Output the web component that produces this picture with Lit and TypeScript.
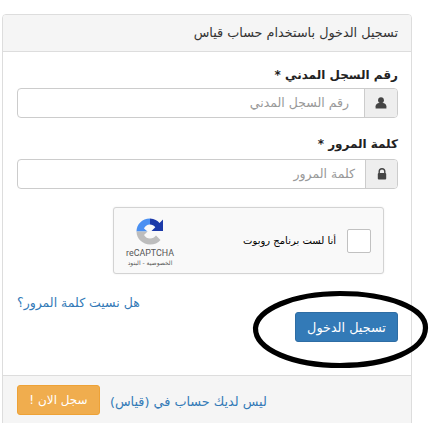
import { LitElement, html, css } from "lit";
import { customElement } from "lit/decorators.js";

@customElement("app-root")
export class AppRoot extends LitElement {
  static styles = css`
    :host { display: block; height: 423px; overflow: hidden; position: relative; background: #fff; font-family: "DejaVu Sans", "Liberation Sans", sans-serif; color: #333; font-size: 14px; }
    * { box-sizing: border-box; }
    .panel { direction: rtl; width: 410px; margin: 14px 0 0 2px; height: 420px; border: 1px solid #ddd; border-radius: 4px; display: flex; flex-direction: column; background: #fff; }
    .head { height: 37px; background: #f5f5f5; border-bottom: 1px solid #ddd; padding: 0 13px; display: flex; align-items: center; font-size: 12.8px; line-height: 20px; border-radius: 3px 3px 0 0; }
    .body { padding: 0 13px 0 14px; flex: none; height: 323px; display: flex; flex-direction: column; }
    label { display: block; font-weight: bold; font-size: 12px; line-height: 20px; color: #222; }
    .l1 { margin-top: 13px; margin-bottom: 3px; }
    .l2 { margin-top: 16px; margin-bottom: 5px; }
    .group { display: flex; height: 30px; border: 1px solid #ccc; border-radius: 4px; overflow: hidden; }
    .addon { width: 33px; flex: none; background: #eee; border-left: 1px solid #ccc; display: flex; align-items: center; justify-content: center; color: #444; }
    .addon.narrow { width: 32px; }
    .ph { flex: 1; padding: 0 15px 2px; font-size: 12.5px; color: #999; display: flex; align-items: center; }
    .ph.tight { padding: 0 10px 2px; }
    .captcha { direction: ltr; margin: 18px 14px 0 0; align-self: flex-start; width: 271px; height: 67px; border: 1px solid #d3d3d3; border-radius: 3px; background: #f9f9f9; display: flex; align-items: flex-start; box-shadow: 0 0 2px rgba(0,0,0,0.08); }
    .logo { width: 72px; display: flex; flex-direction: column; align-items: center; flex: none; padding-top: 9px; }
    .logo svg { display: block; }
    .rc { font-family: "Roboto", "Liberation Sans", sans-serif; font-size: 8.9px; line-height: 10px; color: #555; margin-top: 2px; }
    .terms { direction: rtl; font-size: 6px; line-height: 9px; color: #555; }
    .robot { flex: 1; height: 100%; direction: rtl; display: flex; align-items: center; padding-right: 12px; font-size: 10px; color: #000; gap: 11px; }
    .check { width: 24px; height: 24px; background: #fff; border: 1px solid #c1c1c1; border-radius: 2px; flex: none; }
    a { color: #337ab7; font-size: 12.5px; line-height: 18px; text-decoration: none; }
    .forgot { direction: rtl; align-self: flex-end; margin-top: 20px; }
    .submit { align-self: flex-start; margin-top: 0; width: 103px; height: 30px; background: #337ab7; border: 1px solid #2e6da4; border-radius: 3px; color: #fff; font-size: 12.8px; display: flex; align-items: center; justify-content: center; }
    .foot { flex: 1; background: #f5f5f5; border-top: 1px solid #ddd; padding: 9px 14px; display: flex; align-items: flex-start; gap: 10px; justify-content: flex-end; }
    .foot a { order: 1; font-size: 12.8px; margin-top: 8px; }
    .warn { width: 83px; height: 30px; background: #f0ad4e; border: 1px solid #eea236; border-radius: 3px; color: #fff; font-size: 12px; display: flex; align-items: center; justify-content: center; order: 2; }
    .ring { position: absolute; left: 250px; top: 288px; pointer-events: none; }
  `;

  render() {
    return html`
      <div class="panel">
        <div class="head">تسجيل الدخول باستخدام حساب قياس</div>
        <div class="body">
          <label class="l1">رقم السجل المدني *</label>
          <div class="group">
            <div class="addon"><svg width="12" height="12" viewBox="0 0 12 12"><circle cx="6" cy="3.2" r="2.9" fill="#444"/><path d="M.6 11.5V9.2C.6 7.4 2.4 6.2 4 6h4c1.6.2 3.4 1.4 3.4 3.2v2.3z" fill="#444"/></svg></div>
            <div class="ph">رقم السجل المدني</div>
          </div>
          <label class="l2">كلمة المرور *</label>
          <div class="group">
            <div class="addon narrow"><svg width="10" height="12" viewBox="0 0 10 12"><path d="M2.2 5.2V3.6a2.8 2.8 0 0 1 5.6 0v1.6" fill="none" stroke="#444" stroke-width="1.4"/><rect x="0.8" y="5" width="8.4" height="6.4" rx="1" fill="#444"/></svg></div>
            <div class="ph tight">كلمة المرور</div>
          </div>
          <div class="captcha">
            <div class="logo">
              <svg width="28" height="29" viewBox="0 0 28 28">
                <path d="M14 1 L14 7 C11 7 8.8 9 8 11 L11.5 14 L0.5 14 C0.5 7 6 1 14 1Z" fill="#4a90f2"/>
                <path d="M14 1 C18.5 1 21.5 3.2 23.5 5.5 L27 2 L27 13.5 L15.5 13.5 L19.3 9.7 C18 8 16 7 14 7Z" fill="#1c3aa9"/>
                <path d="M0.5 14 L11.5 14 L8 17.5 C9.5 20 11.5 21 14 21 C16.5 21 18.5 20 20 18 L24.5 22.5 C22 25.5 18.5 27 14 27 C7 27 0.5 21.5 0.5 14Z" fill="#bdbdbd"/>
              </svg>
              <div class="rc">reCAPTCHA</div>
              <div class="terms">الخصوصية - البنود</div>
            </div>
            <div class="robot"><div class="check"></div><span>أنا لست برنامج روبوت</span></div>
          </div>
          <a class="forgot" href="#" @click=${(e: Event) => e.preventDefault()}>هل نسيت كلمة المرور؟</a>
          <div class="submit">تسجيل الدخول</div>
        </div>
        <div class="foot">
          <a href="#" @click=${(e: Event) => e.preventDefault()}>ليس لديك حساب في (قياس)</a>
          <div class="warn">سجل الان !</div>
        </div>
      </div>
      <svg class="ring" width="182" height="84" viewBox="0 0 182 84">
        <path d="M5.5 40 C7 22 42 5.5 90 5.5 C138 5.5 176 20 175.5 40 C175 62 138 77.5 90 77.5 C44 77.5 5 62 5.5 40Z" fill="none" stroke="#000" stroke-width="5.2"/>
      </svg>
    `;
  }
}
